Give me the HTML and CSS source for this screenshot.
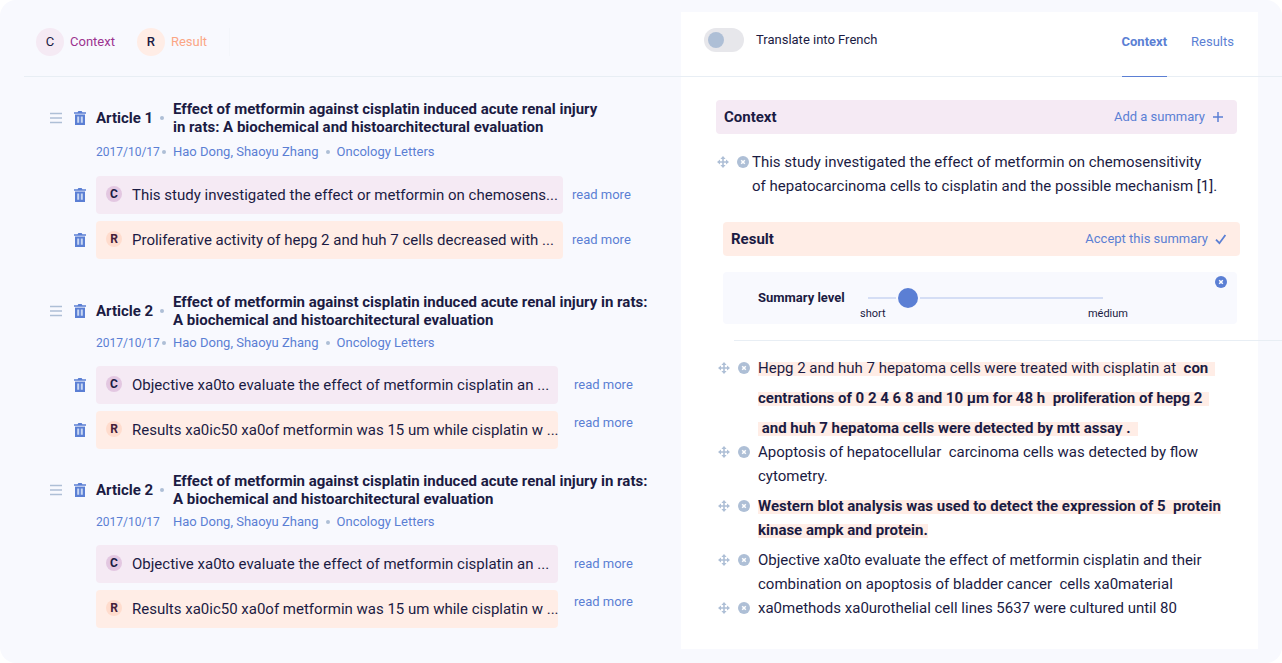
FILE: index.html
```html
<!DOCTYPE html>
<html lang="en">
<head>
    <meta charset="UTF-8">
    <meta name="viewport" content="width=device-width, initial-scale=1.0">
    <title>Article summaries</title>
    <link rel="stylesheet" href="styles.css">
</head>
<body>
    <!-- Shared icons -->
    <svg class="sprite" aria-hidden="true">
        <symbol id="icon-drag" viewBox="0 0 12 12">
            <path d="M0 1.5h12M0 6h12M0 10.5h12" stroke="currentColor" stroke-width="1.6"/>
        </symbol>
        <symbol id="icon-trash" viewBox="0 0 12 14">
            <path d="M0 1.2h3.6L4.4 0h3.2l.8 1.2H12v1.6H0z" fill="currentColor"/>
            <path d="M1 3.6h10V14H1z" fill="currentColor"/>
            <path d="M3.2 5.4h2v6.4h-2zM6.8 5.4h2v6.4h-2z" fill="#c9d7f3"/>
        </symbol>
        <symbol id="icon-move" viewBox="0 0 12 12">
            <path d="M6 1.5v9M1.5 6h9" stroke="currentColor" stroke-width="1.6"/>
            <path d="M6 0l2.6 3H3.4zM6 12l2.6-3H3.4zM0 6l3-2.6v5.2zM12 6L9 3.4v5.2z" fill="currentColor"/>
        </symbol>
        <symbol id="icon-remove" viewBox="0 0 12 12">
            <circle cx="6" cy="6" r="6" fill="currentColor"/>
            <path d="M4.2 4.2l3.6 3.6M7.8 4.2L4.2 7.8" stroke="#fff" stroke-width="1.5"/>
        </symbol>
        <symbol id="icon-plus" viewBox="0 0 12 12">
            <path d="M6 1v10M1 6h10" stroke="currentColor" stroke-width="1.5"/>
        </symbol>
        <symbol id="icon-check" viewBox="0 0 12 12">
            <path d="M1 6.6l3.4 3.6L10.4 2" fill="none" stroke="currentColor" stroke-width="1.8"/>
        </symbol>
    </svg>

    <div class="app">
        <main class="articles">
            <header class="legend">
                <div class="legend-item legend-context"><span class="legend-badge">C</span>Context</div>
                <div class="legend-item legend-result"><span class="legend-badge">R</span>Result</div>
            </header>

            <article class="article article-first">
                <div class="article-head">
                    <button class="icon-button drag" aria-label="Reorder"><svg class="icon"><use href="#icon-drag"/></svg></button>
                    <button class="icon-button" aria-label="Delete article"><svg class="icon icon-tall"><use href="#icon-trash"/></svg></button>
                    <span class="article-number">Article 1</span>
                    <span class="dot"></span>
                    <h2>Effect of metformin against cisplatin induced acute renal injury<br>in rats: A biochemical and histoarchitectural evaluation</h2>
                </div>
                <div class="meta">
                    <span class="meta-date">2017/10/17</span>
                    <span class="dot"></span>
                    <a href="#">Hao Dong, Shaoyu Zhang</a>
                    <span class="dot"></span>
                    <a href="#">Oncology Letters</a>
                </div>
                <div class="snippet-row">
                    <button class="icon-button" aria-label="Delete snippet"><svg class="icon icon-tall"><use href="#icon-trash"/></svg></button>
                    <p class="snippet snippet-context"><span class="badge">C</span>This study investigated the effect or metformin on chemosens...</p>
                    <a class="read-more" href="#">read more</a>
                </div>
                <div class="snippet-row">
                    <button class="icon-button" aria-label="Delete snippet"><svg class="icon icon-tall"><use href="#icon-trash"/></svg></button>
                    <p class="snippet snippet-result"><span class="badge">R</span>Proliferative activity of hepg 2 and huh 7 cells decreased with ...</p>
                    <a class="read-more" href="#">read more</a>
                </div>
            </article>

            <article class="article">
                <div class="article-head">
                    <button class="icon-button drag" aria-label="Reorder"><svg class="icon"><use href="#icon-drag"/></svg></button>
                    <button class="icon-button" aria-label="Delete article"><svg class="icon icon-tall"><use href="#icon-trash"/></svg></button>
                    <span class="article-number">Article 2</span>
                    <span class="dot"></span>
                    <h2>Effect of metformin against cisplatin induced acute renal injury in rats:<br>A biochemical and histoarchitectural evaluation</h2>
                </div>
                <div class="meta">
                    <span class="meta-date">2017/10/17</span>
                    <span class="dot"></span>
                    <a href="#">Hao Dong, Shaoyu Zhang</a>
                    <span class="dot"></span>
                    <a href="#">Oncology Letters</a>
                </div>
                <div class="snippet-row">
                    <button class="icon-button" aria-label="Delete snippet"><svg class="icon icon-tall"><use href="#icon-trash"/></svg></button>
                    <p class="snippet snippet-context"><span class="badge">C</span>Objective xa0to evaluate the effect of metformin cisplatin an ...</p>
                    <a class="read-more" href="#">read more</a>
                </div>
                <div class="snippet-row">
                    <button class="icon-button" aria-label="Delete snippet"><svg class="icon icon-tall"><use href="#icon-trash"/></svg></button>
                    <p class="snippet snippet-result"><span class="badge">R</span>Results xa0ic50 xa0of metformin was 15 um while cisplatin w ...</p>
                    <a class="read-more read-more-high" href="#">read more</a>
                </div>
            </article>

            <article class="article">
                <div class="article-head">
                    <button class="icon-button drag" aria-label="Reorder"><svg class="icon"><use href="#icon-drag"/></svg></button>
                    <button class="icon-button" aria-label="Delete article"><svg class="icon icon-tall"><use href="#icon-trash"/></svg></button>
                    <span class="article-number">Article 2</span>
                    <span class="dot"></span>
                    <h2>Effect of metformin against cisplatin induced acute renal injury in rats:<br>A biochemical and histoarchitectural evaluation</h2>
                </div>
                <div class="meta">
                    <span class="meta-date">2017/10/17</span>
                    <span class="dot dot-empty"></span>
                    <a href="#">Hao Dong, Shaoyu Zhang</a>
                    <span class="dot"></span>
                    <a href="#">Oncology Letters</a>
                </div>
                <div class="snippet-row">
                    <p class="snippet snippet-context"><span class="badge">C</span>Objective xa0to evaluate the effect of metformin cisplatin an ...</p>
                    <a class="read-more" href="#">read more</a>
                </div>
                <div class="snippet-row">
                    <p class="snippet snippet-result"><span class="badge">R</span>Results xa0ic50 xa0of metformin was 15 um while cisplatin w ...</p>
                    <a class="read-more read-more-high" href="#">read more</a>
                </div>
            </article>
        </main>

        <aside class="panel">
            <header class="panel-head">
                <label class="translate"><input type="checkbox" class="toggle">Translate into French</label>
                <nav class="tabs">
                    <a class="active" href="#context">Context</a>
                    <a href="#results">Results</a>
                </nav>
            </header>

            <section class="context" id="context">
                <div class="bar bar-context">
                    <h3>Context</h3>
                    <button class="bar-action">Add a summary <svg class="icon"><use href="#icon-plus"/></svg></button>
                </div>
                <div class="entry">
                    <div class="entry-tools">
                        <button class="icon-button" aria-label="Move"><svg class="icon"><use href="#icon-move"/></svg></button>
                        <button class="icon-button" aria-label="Remove"><svg class="icon"><use href="#icon-remove"/></svg></button>
                    </div>
                    <p>This study investigated the effect of metformin on chemosensitivity<br>of hepatocarcinoma cells to cisplatin and the possible mechanism [1].</p>
                </div>
            </section>

            <section class="results" id="results">
                <div class="bar bar-result">
                    <h3>Result</h3>
                    <button class="bar-action">Accept this summary <svg class="icon"><use href="#icon-check"/></svg></button>
                </div>
                <div class="level">
                    <label for="level">Summary level</label>
                    <div class="level-control">
                        <input type="range" id="level" min="0" max="100" value="14">
                        <div class="level-marks"><span>short</span><span>médium</span></div>
                    </div>
                    <button class="icon-button level-close" aria-label="Close"><svg class="icon"><use href="#icon-remove"/></svg></button>
                </div>
            </section>

            <section class="entries">
                <div class="entry entry-spaced">
                    <div class="entry-tools">
                        <button class="icon-button" aria-label="Move"><svg class="icon"><use href="#icon-move"/></svg></button>
                        <button class="icon-button" aria-label="Remove"><svg class="icon"><use href="#icon-remove"/></svg></button>
                    </div>
                    <p>
                        <mark>Hepg 2 and huh 7 hepatoma cells were treated with cisplatin at  <b>con</b></mark>
                        <mark><b>centrations of 0 2 4 6 8 and 10 μm for 48 h  proliferation of hepg 2</b></mark>
                        <mark><b> and huh 7 hepatoma cells were detected by mtt assay .</b></mark>
                    </p>
                </div>
                <div class="entry">
                    <div class="entry-tools">
                        <button class="icon-button" aria-label="Move"><svg class="icon"><use href="#icon-move"/></svg></button>
                        <button class="icon-button" aria-label="Remove"><svg class="icon"><use href="#icon-remove"/></svg></button>
                    </div>
                    <p>Apoptosis of hepatocellular&nbsp; carcinoma cells was detected by flow<br>cytometry.</p>
                </div>
                <div class="entry entry-key">
                    <div class="entry-tools">
                        <button class="icon-button" aria-label="Move"><svg class="icon"><use href="#icon-move"/></svg></button>
                        <button class="icon-button" aria-label="Remove"><svg class="icon"><use href="#icon-remove"/></svg></button>
                    </div>
                    <p>
                        <mark><b>Western blot analysis was used to detect the expression of 5  protein</b></mark>
                        <mark><b>kinase ampk and protein.</b></mark>
                    </p>
                </div>
                <div class="entry">
                    <div class="entry-tools">
                        <button class="icon-button" aria-label="Move"><svg class="icon"><use href="#icon-move"/></svg></button>
                        <button class="icon-button" aria-label="Remove"><svg class="icon"><use href="#icon-remove"/></svg></button>
                    </div>
                    <p>Objective xa0to evaluate the effect of metformin cisplatin and their<br>combination on apoptosis of bladder cancer&nbsp; cells xa0material</p>
                </div>
                <div class="entry">
                    <div class="entry-tools">
                        <button class="icon-button" aria-label="Move"><svg class="icon"><use href="#icon-move"/></svg></button>
                        <button class="icon-button" aria-label="Remove"><svg class="icon"><use href="#icon-remove"/></svg></button>
                    </div>
                    <p>xa0methods xa0urothelial cell lines 5637 were cultured until 80</p>
                </div>
            </section>
        </aside>
    </div>
</body>
</html>
```
FILE: styles.css
```css
* {
    box-sizing: border-box;
}

body {
    margin: 0;
    background: #ffffff;
    color: #1b1b43;
    font-family: Roboto, "Liberation Sans", sans-serif;
    font-size: 15px;
    line-height: 24px;
}

h2, h3, p {
    margin: 0;
    font-size: 15px;
}

a {
    color: #5b7fd4;
    text-decoration: none;
}

button {
    padding: 0;
    border: 0;
    background: none;
    color: #5b7fd4;
    font: inherit;
    cursor: pointer;
}

.sprite {
    display: none;
}

.icon {
    display: block;
    width: 12px;
    height: 12px;
}

.icon-tall {
    height: 14px;
}

.app {
    display: grid;
    grid-template-columns: 681fr 577fr;
    min-height: 100vh;
    padding-right: 24px;
    background: #f8f9fe;
    border-radius: 16px;
    overflow: hidden;
}

/* Left column */
.legend {
    display: flex;
    align-items: center;
    gap: 22px;
    height: 77px;
    margin-left: 24px;
    padding: 7px 12px 0;
    border-bottom: 1px solid #e8eef4;
    font-size: 13px;
}

.legend-item {
    display: flex;
    align-items: center;
    gap: 6px;
}

.legend-context {
    color: #9c3490;
}

.legend-result {
    height: 28px;
    padding-right: 22px;
    border-right: 1px solid #f4f6fb;
    color: #fba685;
}

.legend-badge {
    width: 28px;
    border-radius: 50%;
    background: #f5eaf4;
    color: #1b1b43;
    line-height: 28px;
    text-align: center;
}

.legend-result .legend-badge {
    background: #ffede6;
    font-weight: 500;
}

.article {
    --link-width: 123px;
    padding: 0 0 23px 50px;
}

.article-first {
    --link-width: 118px;
    padding-top: 23px;
    padding-bottom: 34px;
}

.article-head {
    display: grid;
    grid-template-columns: 24px 22px 64px 13px 1fr;
    align-items: center;
}

.article-head h2 {
    line-height: 18px;
}

.article-number {
    font-weight: 700;
}

.drag {
    color: #aebfd6;
}

.dot {
    width: 4px;
    height: 4px;
    border-radius: 50%;
    background: #aebfd6;
}

.dot-empty {
    visibility: hidden;
}

.meta {
    display: flex;
    align-items: center;
    gap: 7px;
    padding: 5px 0 14px 46px;
    color: #5b7fd4;
    font-size: 13px;
    line-height: 18px;
}

.meta-date {
    width: 59px;
    font-size: 12px;
    white-space: nowrap;
}

.article-first .meta {
    padding-top: 7px;
    padding-bottom: 15px;
}

.snippet-row {
    display: grid;
    grid-template-columns: 1fr var(--link-width);
    align-items: center;
    padding-left: 46px;
}

.snippet-row:has(.icon-button) {
    grid-template-columns: 22px 1fr var(--link-width);
    padding-left: 24px;
}

.snippet-row + .snippet-row {
    margin-top: 7px;
}

.snippet {
    display: flex;
    align-items: center;
    gap: 10px;
    height: 38px;
    padding-left: 10px;
    border-radius: 4px;
    white-space: nowrap;
    overflow: hidden;
}

.snippet-context {
    background: #f5eaf4;
}

.snippet-result {
    background: #ffede6;
}

.badge {
    flex: none;
    width: 16px;
    margin-bottom: 2px;
    border-radius: 50%;
    background: #e3c7e1;
    font-size: 12px;
    font-weight: 700;
    line-height: 16px;
    text-align: center;
}

.snippet-result .badge {
    background: #ffdccd;
    color: #44203a;
}

.read-more {
    padding-left: 16px;
    font-size: 13px;
}

.article-first .read-more {
    padding-left: 9px;
}

.read-more-high {
    align-self: start;
}

/* Right panel */
.panel {
    margin: 12px 0 14px;
    background: #ffffff;
}

.panel-head {
    position: relative;
    display: flex;
    justify-content: space-between;
    height: 65px;
    padding: 0 24px 0 23px;
    border-bottom: 1px solid #e8eef4;
    font-size: 13px;
}

/* Rules run on over the outer margin */
.panel-head::after,
.results::after {
    content: "";
    position: absolute;
    bottom: -1px;
    left: 100%;
    width: 24px;
    height: 1px;
    background: #e8eef4;
}

.translate {
    display: flex;
    align-items: center;
    gap: 12px;
    height: 56px;
}

.toggle {
    appearance: none;
    display: flex;
    width: 40px;
    height: 24px;
    margin: 0;
    padding: 4px;
    border-radius: 12px;
    background: #e7e7eb;
}

.toggle::before {
    content: "";
    width: 16px;
    height: 16px;
    border-radius: 50%;
    background: #aebfd6;
}

.toggle:checked {
    justify-content: flex-end;
}

.tabs {
    display: flex;
    gap: 24px;
}

.tabs a {
    height: 65px;
    padding-top: 18px;
}

.tabs .active {
    border-bottom: 1px solid #5b7fd4;
    font-weight: 700;
}

.bar {
    display: flex;
    align-items: center;
    justify-content: space-between;
    height: 34px;
    padding: 0 13px 0 8px;
    border-radius: 4px;
}

.bar-context {
    margin-bottom: 16px;
    background: #f5eaf4;
}

.bar-result {
    margin: 0 -3px 16px 0;
    background: #ffede6;
}

.bar-action {
    display: flex;
    align-items: center;
    gap: 7px;
    font-size: 13px;
}

.context {
    padding: 23px 21px 24px 35px;
}

.entry {
    display: flex;
    gap: 8px;
}

.context .entry {
    gap: 3px;
    padding-left: 1px;
}

.entry-tools {
    display: flex;
    align-items: center;
    gap: 8px;
    height: 24px;
}

.entry-tools .icon-button {
    color: #aebfd6;
}

.results {
    position: relative;
    margin-left: 53px;
    padding: 0 21px 16px 0;
    border-bottom: 1px solid #e8eef4;
}

.results .bar,
.level {
    margin-left: -11px;
}

.level {
    position: relative;
    display: flex;
    justify-content: space-between;
    height: 52px;
    padding: 0 109px 0 35px;
    border-radius: 4px;
    background: #f8f9fe;
}

.level label {
    font-size: 13px;
    font-weight: 700;
    line-height: 52px;
}

.level-control {
    width: 268px;
    padding-top: 16px;
}

.level-control input {
    appearance: none;
    display: block;
    width: 235px;
    height: 20px;
    margin: 0 8px;
    background: none;
}

.level-control input::-webkit-slider-runnable-track {
    height: 2px;
    background: #d5def5;
}

.level-control input::-webkit-slider-thumb {
    appearance: none;
    width: 20px;
    height: 20px;
    margin-top: -9px;
    border-radius: 50%;
    background: #5b7fd4;
    box-shadow: 0 0 0 2px #f8f9fe;
}

.level-marks {
    display: flex;
    justify-content: space-between;
    font-size: 11px;
    line-height: 12px;
}

.level-close {
    position: absolute;
    top: 4px;
    right: 10px;
}

.entries {
    padding: 15px 21px 29px 37px;
}

.entry-spaced p,
.entry-key p {
    display: flex;
    flex-direction: column;
    align-items: flex-start;
}

.entry-spaced p {
    gap: 6px;
}

.entry-key {
    margin: 6px 0;
}

mark {
    padding-right: 7px;
    background: linear-gradient(#ffede6, #ffede6) 0 6px / 100% 14px no-repeat;
    color: inherit;
    white-space: pre;
}

.entry-key mark {
    padding-right: 0;
}
```
